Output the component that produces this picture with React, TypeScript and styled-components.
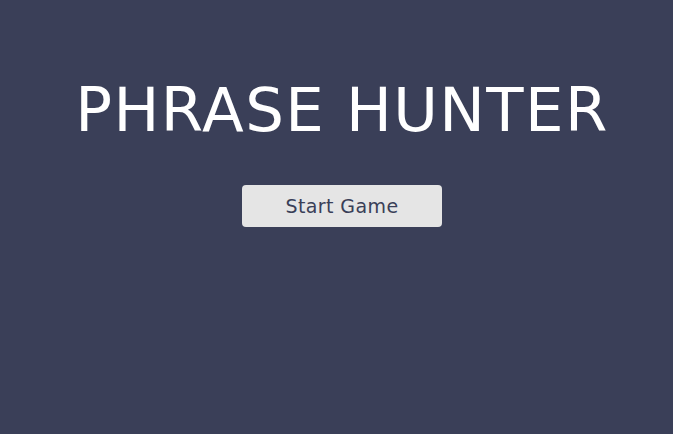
import React from "react";
import styled, { createGlobalStyle } from "styled-components";

const Global = createGlobalStyle`
  html, body { margin: 0; padding: 0; background: #3a3f58; }
  body { font-family: "DejaVu Sans", sans-serif; }
`;

const Overlay = styled.div`
  width: 673px;
  height: 434px;
  background: #3a3f58;
  display: flex;
  flex-direction: column;
  align-items: center;
  padding-top: 79px;
  padding-left: 11px;
  box-sizing: border-box;
`;

const Title = styled.h2`
  margin: 0;
  color: #ffffff;
  font-family: "DejaVu Sans", sans-serif;
  font-weight: 400;
  font-size: 61px;
  line-height: 61px;
  letter-spacing: 1.4px;
  white-space: nowrap;
`;

const StartButton = styled.button`
  margin-top: 45px;
  width: 200px;
  height: 42px;
  border: none;
  border-radius: 4px;
  background: #e5e5e5;
  color: #3a3f58;
  font-family: "DejaVu Sans", sans-serif;
  font-size: 19px;
  letter-spacing: 0.4px;
  padding: 0;
`;

export default function App() {
  return (
    <>
      <Global />
      <Overlay>
        <Title>PHRASE HUNTER</Title>
        <StartButton>Start Game</StartButton>
      </Overlay>
    </>
  );
}
